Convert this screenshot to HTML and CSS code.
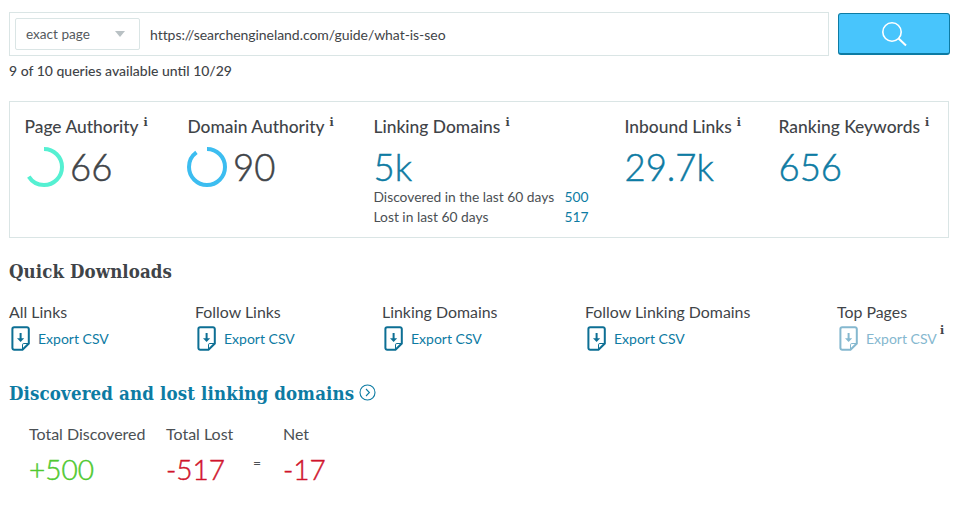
FILE: index.html
```html
<!DOCTYPE html>
<html lang="en">
<head>
<meta charset="utf-8">
<title>Link Explorer</title>
<link rel="stylesheet" href="styles.css">
</head>
<body>
<div class="search-row">
  <div class="search-box">
    <div class="select"><span>exact page</span><i class="caret"></i></div>
    <div class="url">https://searchengineland.com/guide/what-is-seo</div>
  </div>
  <button class="go" aria-label="Search">
    <svg width="26" height="26" viewBox="0 0 26 26" fill="none" stroke="#fff"><circle cx="11" cy="11" r="9.2" stroke-width="1.6"/><path d="M17.6 17.6L25 24.6" stroke-width="2"/></svg>
  </button>
</div>
<p class="quota">9 of 10 queries available until 10/29</p>

<section class="metrics">
  <div class="metric">
    <h3 class="m-label">Page Authority<sup class="info">i</sup></h3>
    <div class="score">
      <svg class="ring" width="40" height="40" viewBox="0 0 40 40"><circle cx="20" cy="20" r="18" fill="none" stroke="#55f0d2" stroke-width="4" pathLength="100" stroke-dasharray="66 100" transform="rotate(-90 20 20)"/></svg>
      <span class="big dark">66</span>
    </div>
  </div>
  <div class="metric">
    <h3 class="m-label">Domain Authority<sup class="info">i</sup></h3>
    <div class="score">
      <svg class="ring" width="40" height="40" viewBox="0 0 40 40"><circle cx="20" cy="20" r="18" fill="none" stroke="#3cbdf0" stroke-width="4" pathLength="100" stroke-dasharray="90 100" transform="rotate(-90 20 20)"/></svg>
      <span class="big dark">90</span>
    </div>
  </div>
  <div class="metric">
    <h3 class="m-label">Linking Domains<sup class="info">i</sup></h3>
    <div class="big teal">5k</div>
    <div class="sub"><span>Discovered in the last 60 days</span><a>500</a></div>
    <div class="sub"><span>Lost in last 60 days</span><a>517</a></div>
  </div>
  <div class="metric">
    <h3 class="m-label">Inbound Links<sup class="info">i</sup></h3>
    <div class="big teal">29.7k</div>
  </div>
  <div class="metric">
    <h3 class="m-label">Ranking Keywords<sup class="info">i</sup></h3>
    <div class="big teal">656</div>
  </div>
</section>

<h2 class="slab qd">Quick Downloads</h2>
<div class="downloads">
  <div class="dl"><div class="dl-name">All Links</div><a class="export"><svg class="doc" width="20" height="25" viewBox="0 0 20 25"><use href="#doc"/></svg>Export CSV</a></div>
  <div class="dl"><div class="dl-name">Follow Links</div><a class="export"><svg class="doc" width="20" height="25" viewBox="0 0 20 25"><use href="#doc"/></svg>Export CSV</a></div>
  <div class="dl"><div class="dl-name">Linking Domains</div><a class="export"><svg class="doc" width="20" height="25" viewBox="0 0 20 25"><use href="#doc"/></svg>Export CSV</a></div>
  <div class="dl"><div class="dl-name">Follow Linking Domains</div><a class="export"><svg class="doc" width="20" height="25" viewBox="0 0 20 25"><use href="#doc"/></svg>Export CSV</a></div>
  <div class="dl"><div class="dl-name">Top Pages</div><a class="export off"><svg class="doc" width="20" height="25" viewBox="0 0 20 25"><use href="#doc"/></svg>Export CSV</a><sup class="info tip">i</sup></div>
</div>

<h2 class="slab disc">Discovered and lost linking domains
  <svg class="chev" width="17" height="17" viewBox="0 0 17 17" fill="none" stroke="#0d7ba3"><circle cx="8.5" cy="8.5" r="7.5" stroke-width="1.1"/><path d="M7 5l3.4 3.5L7 12" stroke-width="1.1"/></svg>
</h2>
<div class="totals">
  <div class="t t1"><div class="t-label">Total Discovered</div><div class="t-val green">+500</div></div>
  <div class="t t2"><div class="t-label">Total Lost</div><div class="t-val red">-517</div></div>
  <div class="eq">=</div>
  <div class="t"><div class="t-label">Net</div><div class="t-val red">-17</div></div>
</div>

<svg class="defs" width="0" height="0" aria-hidden="true">
  <symbol id="doc" viewBox="0 0 20 25">
    <path d="M3.2 1.2H16a1.8 1.8 0 0 1 1.8 1.8V17.5L11.5 23.8H3.2a1.8 1.8 0 0 1-1.8-1.8V3a1.8 1.8 0 0 1 1.8-1.8z" fill="none" stroke="currentColor" stroke-width="2"/>
    <path d="M17.8 17.5h-5a1.3 1.3 0 0 0-1.3 1.3v5" fill="none" stroke="currentColor" stroke-width="1"/>
    <path d="M9.6 7v7" stroke="currentColor" stroke-width="2" fill="none"/>
    <path d="M6 12.2h7.2L9.6 16z" fill="currentColor"/>
  </symbol>
</svg>
</body>
</html>
```
FILE: styles.css
```css
* { box-sizing: border-box; }
html, body { margin: 0; padding: 0; background: #fff; }
body {
  width: 961px;
  height: 509px;
  overflow: hidden;
  padding: 12px 11px 0 9px;
  font-family: Lato, "Open Sans", sans-serif;
  color: #3f4448;
}
.search-row { display: flex; align-items: flex-start; gap: 9px; }
.search-box {
  width: 820px;
  height: 44px;
  border: 1px solid #dae5e5;
  padding: 5px;
  display: flex;
  align-items: center;
}
.select {
  width: 125px;
  height: 32px;
  border: 1px solid #dae5e5;
  border-radius: 2px;
  padding: 0 14px 0 10px;
  display: flex;
  align-items: center;
  justify-content: space-between;
  font-size: 13.6px;
  color: #555a5e;
}
.caret {
  width: 0; height: 0;
  border-left: 5px solid transparent;
  border-right: 5px solid transparent;
  border-top: 6px solid #b9c1c4;
}
.url { margin-left: 10px; font-size: 14px; color: #3f4448; letter-spacing: -.05px; }
.go {
  width: 112px;
  height: 42px;
  margin-top: 1px;
  border: 1px solid #0d7ba3;
  border-bottom-width: 2px;
  border-radius: 3px;
  background: #48c5fc;
  display: flex;
  align-items: center;
  justify-content: center;
  padding: 0;
}
.quota { margin: 7px 0 0; height: 16px; line-height: 16px; font-size: 14px; font-weight: 500; color: #3f4448; }

.metrics {
  margin-top: 22px;
  width: 940px;
  height: 137px;
  border: 1px solid #dae5e5;
  padding: 13px 0 0 14.5px;
  display: grid;
  grid-template-columns: 163px 186px 251px 154px 1fr;
}
.m-label { margin: 0; font-size: 17.4px; line-height: 24px; font-weight: 500; color: #3f4448; white-space: nowrap; }
.info {
  font-family: "DejaVu Serif", serif;
  font-size: 11px;
  font-weight: 700;
  line-height: 0;
  margin-left: 5px;
  vertical-align: 7px;
  color: #3f4448;
}
.score { display: flex; align-items: center; margin-top: 8px; height: 41px; }
.ring { flex: none; margin: 0 6px 2px -.5px; }
.big { font-size: 36.5px; line-height: 41px; font-weight: 300; -webkit-text-stroke: .5px currentColor; }
.dark { color: #3f4448; }
.teal { color: #0d7ba3; margin-top: 8px; }
.sub { display: flex; width: 215px; justify-content: space-between; font-size: 13.8px; line-height: 20px; color: #4b5054; }
.metric .teal + .sub { margin-top: -1px; }
.sub a { color: #0d7ba3; }

.slab { margin: 0; font-family: "DejaVu Serif", serif; font-weight: 700; font-stretch: condensed; white-space: nowrap; }
.qd { margin-top: 22px; font-size: 18.5px; line-height: 24px; color: #3f4448; letter-spacing: .1px; }
.downloads {
  margin-top: 18px;
  display: grid;
  grid-template-columns: 186px 187px 203px 252px 1fr;
}
.dl { position: relative; }
.dl-name { font-size: 15.9px; line-height: 20px; color: #3f4448; white-space: nowrap; }
.export { margin-top: 4px; display: flex; align-items: center; gap: 7px; height: 25px; font-size: 14px; color: #0d7ba3; padding-left: 2px; white-space: nowrap; }
.doc { flex: none; color: #0d6f94; }
.off { color: #85b8cf; }
.off .doc { color: #85b8cf; }
.tip { position: absolute; left: 103px; top: 24px; margin: 0; line-height: 10px; vertical-align: baseline; }

.disc { margin-top: 30px; font-size: 18.5px; line-height: 26px; color: #0d7ba3; letter-spacing: .15px; display: flex; align-items: center; gap: 5px; }
.chev { flex: none; margin-top: -3px; }
.totals { margin: 17px 0 0 20px; display: flex; }
.t1 { width: 137px; }
.t2 { width: 87px; }
.t-label { font-size: 16px; line-height: 20px; color: #4b5054; white-space: nowrap; }
.t-val { margin-top: 8px; font-size: 28px; line-height: 34px; font-weight: 300; -webkit-text-stroke: .45px currentColor; }
.eq { width: 30px; padding-top: 29px; font-size: 14px; line-height: 20px; color: #4b5054; }
.green { color: #4fc92f; }
.red { color: #d0142c; }
.defs { position: absolute; }
```
